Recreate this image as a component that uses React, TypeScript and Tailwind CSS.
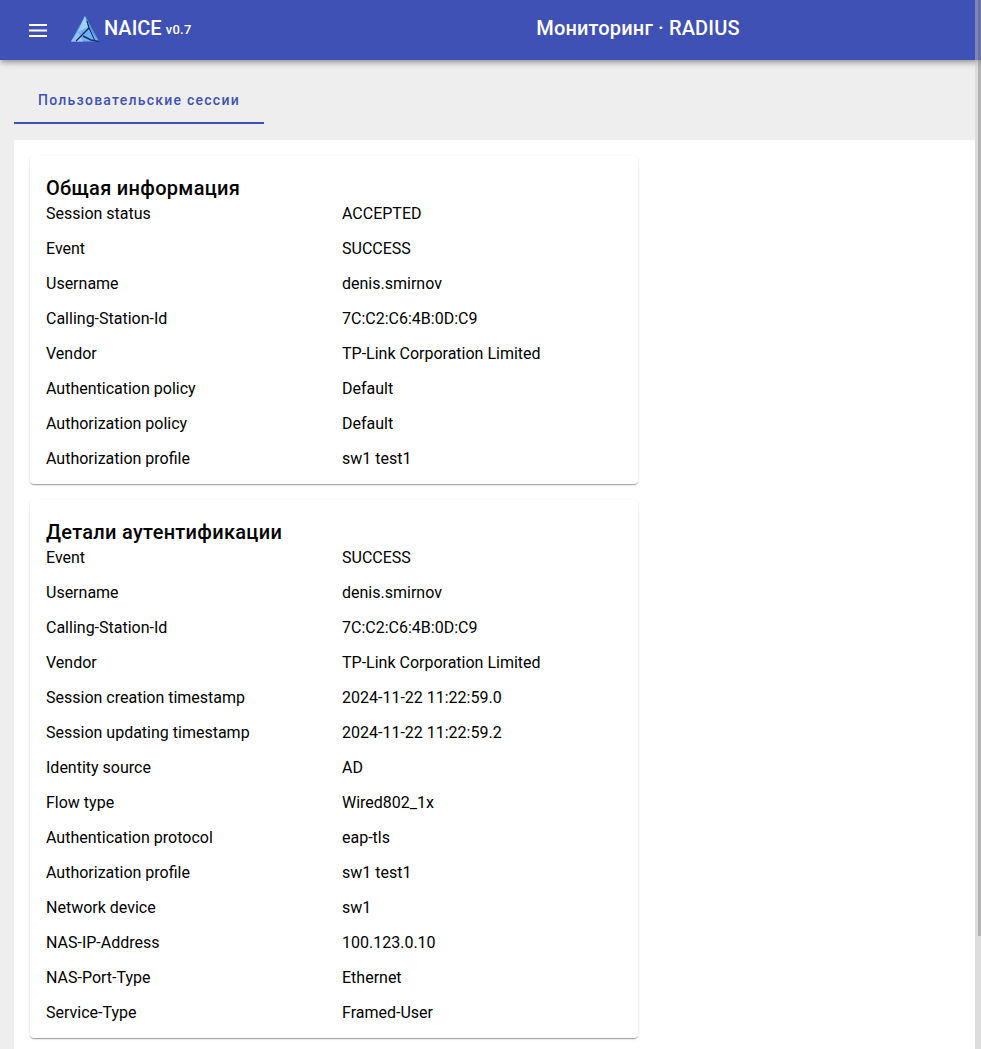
const summary = [
  ['Session status', 'ACCEPTED'],
  ['Event', 'SUCCESS'],
  ['Username', 'denis.smirnov'],
  ['Calling-Station-Id', '7C:C2:C6:4B:0D:C9'],
  ['Vendor', 'TP-Link Corporation Limited'],
  ['Authentication policy', 'Default'],
  ['Authorization policy', 'Default'],
  ['Authorization profile', 'sw1 test1'],
];

const details = [
  ['Event', 'SUCCESS'],
  ['Username', 'denis.smirnov'],
  ['Calling-Station-Id', '7C:C2:C6:4B:0D:C9'],
  ['Vendor', 'TP-Link Corporation Limited'],
  ['Session creation timestamp', '2024-11-22 11:22:59.0'],
  ['Session updating timestamp', '2024-11-22 11:22:59.2'],
  ['Identity source', 'AD'],
  ['Flow type', 'Wired802_1x'],
  ['Authentication protocol', 'eap-tls'],
  ['Authorization profile', 'sw1 test1'],
  ['Network device', 'sw1'],
  ['NAS-IP-Address', '100.123.0.10'],
  ['NAS-Port-Type', 'Ethernet'],
  ['Service-Type', 'Framed-User'],
];

function Logo() {
  return (
    <svg width="28" height="26" viewBox="0 0 28 26" className="shrink-0">
      <polygon points="14,0 0,25.5 28,25.5" fill="#6fb0f2" />
      <polygon points="14,0 7,16 17,11" fill="#9fd0fa" />
      <polygon points="0,25.5 7,16 12,25.5" fill="#93c7f8" />
      <polygon points="14,0 17,11 28,25.5" fill="#4f93de" />
      <path d="M16 5 L18 12 L24 25" stroke="#0d2350" strokeWidth="1" fill="none" />
      <path d="M5 25 L18 12" stroke="#0d2350" strokeWidth="1.3" fill="none" />
      <path d="M12 20 L20 24 L28 25.5" stroke="#12306a" strokeWidth="1.4" fill="none" />
    </svg>
  );
}

function Card({ title, rows }: { title: string; rows: string[][] }) {
  return (
    <section className="w-[608px] rounded bg-white px-4 pt-4 pb-[15px] text-black shadow-[0_2px_1px_-1px_rgba(0,0,0,0.2),0_1px_1px_0_rgba(0,0,0,0.14),0_1px_3px_0_rgba(0,0,0,0.12)]">
      <h2 className="h-8 text-[20px] leading-[32px] font-medium tracking-[0.3px]">{title}</h2>
      <div className="flex flex-col gap-[15px]">
        {rows.map(([label, value]) => (
          <div key={label} className="grid grid-cols-[296px_1fr] text-base leading-5">
            <span>{label}</span>
            <span>{value}</span>
          </div>
        ))}
      </div>
    </section>
  );
}

export default function App() {
  return (
    <div className="relative flex h-screen flex-col overflow-hidden bg-[#eeeeee] font-['Roboto',sans-serif]">
      <header className="z-10 flex h-[60px] shrink-0 items-center bg-[#3f51b5] text-white shadow-[0_2px_4px_-1px_rgba(0,0,0,0.2),0_4px_5px_0_rgba(0,0,0,0.14),0_1px_10px_0_rgba(0,0,0,0.12)]">
        <div className="flex w-[301px] shrink-0 items-center">
          <svg width="18" height="13" viewBox="0 0 18 13" className="ml-[29px]">
            <rect y="0" width="18" height="2" fill="#fff" />
            <rect y="5.5" width="18" height="2" fill="#fff" />
            <rect y="11" width="18" height="2" fill="#fff" />
          </svg>
          <div className="ml-[24px] -mt-[2px]">
            <Logo />
          </div>
          <span className="ml-[5px] -mt-1 text-[20px] leading-6 font-medium">NAICE</span>
          <span className="ml-[4px] text-[13px] leading-4 font-medium tracking-[0.3px]">v0.7</span>
        </div>
        <h1 className="mr-[6px] mb-1 flex-1 text-center text-[20px] leading-6 font-medium tracking-[0.15px]">
          Мониторинг · RADIUS
        </h1>
      </header>

      <div className="ml-[14px] flex h-[80px] shrink-0 items-end pb-4">
        <div className="flex h-16 w-[250px] items-center justify-center border-b-2 border-[#3f51b5] pt-[18px] text-sm font-medium tracking-[1.25px] text-[#3f51b5]">
          Пользовательские сессии
        </div>
      </div>

      <main className="mr-[6px] ml-[14px] flex flex-1 flex-col gap-4 bg-white p-4">
        <Card title="Общая информация" rows={summary} />
        <Card title="Детали аутентификации" rows={details} />
      </main>

      {/* полоса прокрутки поверх шапки */}
      <div className="absolute top-0 right-0 bottom-0 z-20 w-[6px] bg-[rgba(200,200,200,0.45)]">
        <div className="ml-[3px] h-[936px] w-[3px] bg-[rgba(58,58,58,0.26)]" />
      </div>
    </div>
  );
}
